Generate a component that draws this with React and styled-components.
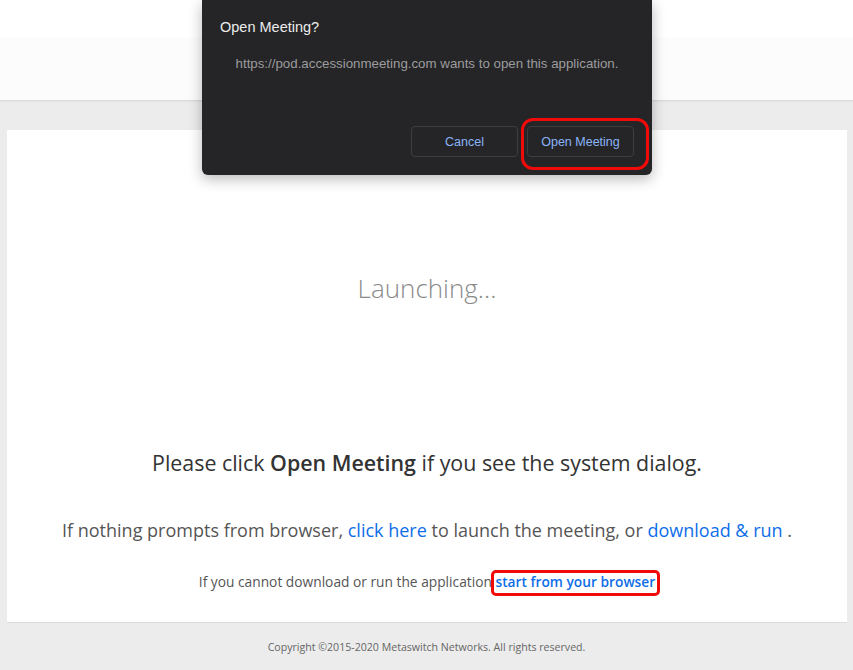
import React from "react";
import styled, { createGlobalStyle } from "styled-components";

const GlobalStyle = createGlobalStyle`
  html, body {
    margin: 0;
    padding: 0;
    background: #ececec;
    font-family: "Open Sans", "Liberation Sans", sans-serif;
  }
`;

const Page = styled.div`
  position: relative;
  width: 853px;
  height: 670px;
  overflow: hidden;
  display: flex;
  flex-direction: column;
  background: #ececec;
`;

const TopStrip = styled.div`
  height: 37px;
  background: #ffffff;
`;

const Header = styled.div`
  height: 63px;
  background: #fcfcfc;
  border-bottom: 1px solid #d9d9d9;
  box-shadow: 0 1px 2px rgba(0, 0, 0, 0.04);
`;

const Card = styled.div`
  margin: 29px 6px 0 7px;
  background: #ffffff;
  border-bottom: 1px solid #dcdcdc;
  display: flex;
  flex-direction: column;
  align-items: center;
  text-align: center;
  padding-bottom: 29px;
`;

const Launching = styled.div`
  margin-top: 140px;
  font-size: 26px;
  line-height: 36px;
  font-weight: 300;
  color: #8a8a8a;
`;

const Prompt = styled.div`
  margin-top: 142px;
  font-size: 21.4px;
  line-height: 30px;
  font-weight: 400;
  color: #333333;

  b {
    font-weight: 600;
  }
`;

const Fallback = styled.div`
  margin-top: 38px;
  font-size: 18px;
  line-height: 28px;
  color: #555555;
`;

const Small = styled.div`
  margin-top: 27px;
  font-size: 13.75px;
  line-height: 22px;
  color: #555555;
`;

const Link = styled.a`
  color: #0e6ee8;
  text-decoration: none;
  font-weight: ${(p) => (p.$bold ? 600 : 400)};
`;

const Marked = styled.span`
  position: relative;
  display: inline-block;
`;

const RedRing = styled.span`
  position: absolute;
  left: ${(p) => p.$l}px;
  right: ${(p) => p.$r}px;
  top: ${(p) => p.$t}px;
  bottom: ${(p) => p.$b}px;
  border: 3px solid #f00a0a;
  border-radius: ${(p) => p.$radius}px;
  pointer-events: none;
`;

const Footer = styled.div`
  flex: 1;
  display: flex;
  align-items: center;
  justify-content: center;
  font-size: 10.6px;
  color: #666666;
`;

const Dialog = styled.div`
  position: absolute;
  left: 202px;
  top: 0;
  width: 450px;
  height: 175px;
  box-sizing: border-box;
  background: #252527;
  border-radius: 0 0 6px 6px;
  box-shadow: 0 4px 14px rgba(0, 0, 0, 0.28);
  padding: 17px 18px 18px 18px;
  display: flex;
  flex-direction: column;
  font-family: "Liberation Sans", Arial, sans-serif;
`;

const DialogTitle = styled.div`
  font-size: 14.5px;
  line-height: 20px;
  color: #ececec;
`;

const DialogMessage = styled.div`
  margin-top: 18px;
  font-size: 13.3px;
  line-height: 18px;
  color: #9c9c9e;
  text-align: center;
`;

const ButtonRow = styled.div`
  margin-top: auto;
  display: flex;
  justify-content: flex-end;
  gap: 9px;
`;

const DialogButton = styled.button`
  width: 107px;
  height: 31px;
  background: #252527;
  border: 1px solid #3e3e41;
  border-radius: 4px;
  color: #8ab4f8;
  font-family: "Liberation Sans", Arial, sans-serif;
  font-size: 12.5px;
  padding: 0;
`;

export default function App() {
  return (
    <>
      <GlobalStyle />
      <Page>
        <TopStrip />
        <Header />
        <Card>
          <Launching>Launching...</Launching>
          <Prompt>
            Please click <b>Open Meeting</b> if you see the system dialog.
          </Prompt>
          <Fallback>
            If nothing prompts from browser, <Link href="#">click here</Link> to
            launch the meeting, or <Link href="#">download &amp; run</Link> .
          </Fallback>
          <Small>
            If you cannot download or run the application{" "}
            <Marked>
              <Link href="#" $bold>
                start from your browser
              </Link>
              <RedRing $l={-4} $r={-5} $t={-1} $b={-3} $radius={5} />
            </Marked>
          </Small>
        </Card>
        <Footer>Copyright ©2015-2020 Metaswitch Networks. All rights reserved.</Footer>

        <Dialog>
          <DialogTitle>Open Meeting?</DialogTitle>
          <DialogMessage>
            https://pod.accessionmeeting.com wants to open this application.
          </DialogMessage>
          <ButtonRow>
            <DialogButton>Cancel</DialogButton>
            <Marked>
              <DialogButton>Open Meeting</DialogButton>
              <RedRing $l={-6} $r={-15} $t={-8} $b={-13} $radius={12} />
            </Marked>
          </ButtonRow>
        </Dialog>
      </Page>
    </>
  );
}
